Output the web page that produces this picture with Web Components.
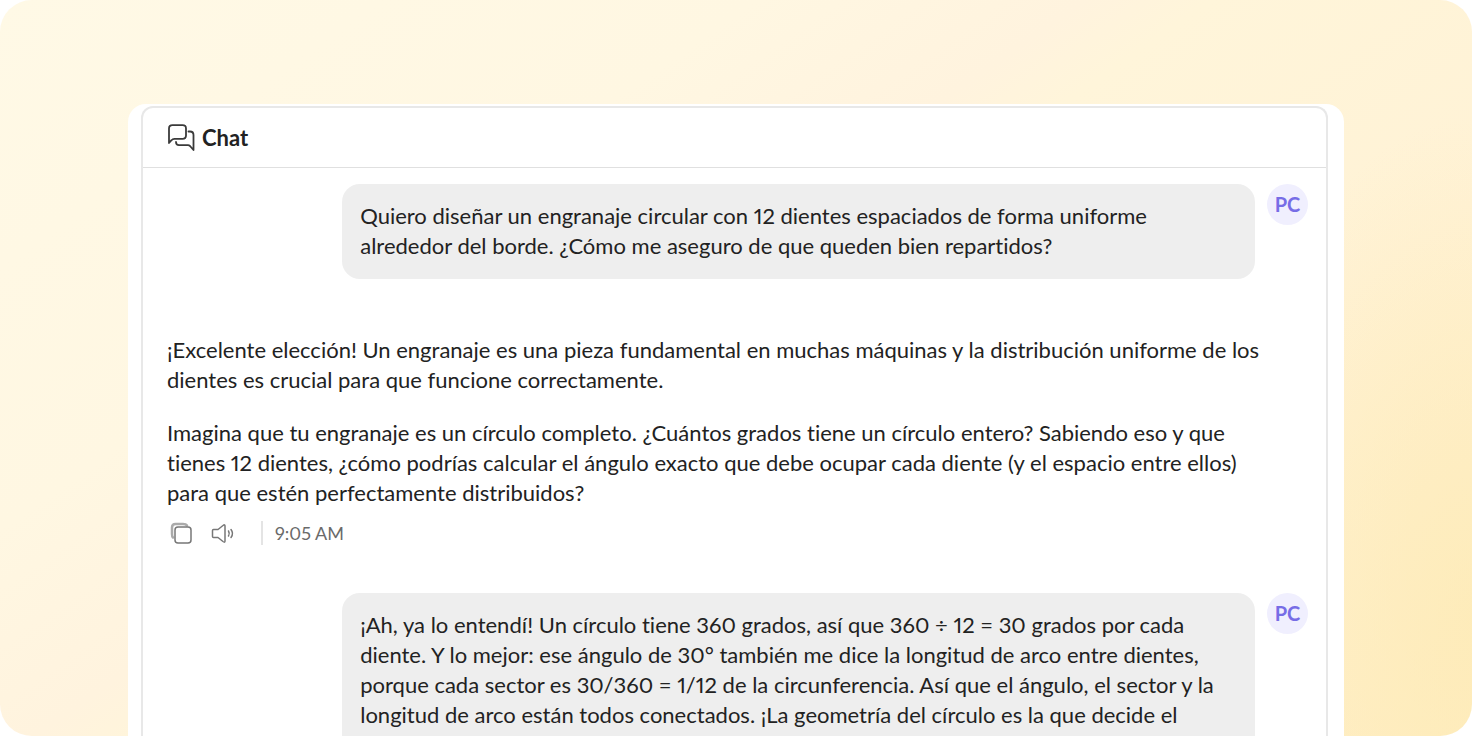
<!DOCTYPE html>
<html lang="es">
<head>
<meta charset="utf-8">
<meta name="viewport" content="width=device-width, initial-scale=1">
<title>Chat</title>
<style>
  body {
    margin: 0;
    background: #fff;
    color: #222;
    font-family: Lato, "Liberation Sans", sans-serif;
    font-size: 22px;
    line-height: 30px;
    font-variant-ligatures: none;
    font-variant-numeric: proportional-nums;
  }

  p {
    margin: 0;
  }
</style>
</head>
<body>

<template id="chat-stage">
  <style>
    :host {
      display: flex;
      box-sizing: border-box;
      height: 100vh;
      min-height: 400px;
      padding: 104px 128px 0;
      overflow: hidden;
      border-radius: 32px;
      background:
        radial-gradient(ellipse 260px 500px at 100% 84%, rgba(253, 234, 180, 0.7), rgba(253, 234, 180, 0) 100%),
        linear-gradient(145deg, #fff9e6 0%, #fff7e2 30%, #fff3de 43%, #fff5da 48%, #fff2d5 70%, #ffeec4 100%);
    }
  </style>
  <slot></slot>
</template>

<template id="chat-panel">
  <style>
    :host {
      display: flex;
      flex: 1;
      box-sizing: border-box;
      min-width: 0;
      padding: 2px 16px 0 13px;
      border-radius: 18px 18px 0 0;
      background: #fff;
    }

    .card {
      flex: 1;
      min-width: 0;
      overflow: hidden;
      border: 2px solid #e8e8e8;
      border-bottom: 0;
      border-radius: 12px 12px 0 0;
    }

    header {
      display: flex;
      align-items: center;
      gap: 7px;
      height: 59px;
      padding: 0 24px;
      border-bottom: 1px solid #e0e0e0;
    }

    h1 {
      margin: 0;
      font-size: 22px;
      font-weight: 700;
      line-height: 30px;
    }

    svg {
      width: 28px;
      height: 28px;
      fill: none;
      stroke: #3a3a3a;
      stroke-width: 1.8;
      stroke-linejoin: round;
      stroke-linecap: round;
    }

    main {
      padding: 16px 18px 16px 24px;
    }
  </style>
  <section class="card">
    <header>
      <svg viewBox="0 0 28 28" aria-hidden="true">
        <path d="M2 19V4.500Q2 1.200 5.500 1.200H15.500Q19 1.200 19 4.500V11.500Q19 14.800 15.500 14.800H7.500Q5.500 14.800 4.500 16.200Z" />
        <path d="M21.500 7.500H23Q26.500 7.500 26.500 11V26L23 22Q22.200 21.200 21 21.200H12Q9 21.200 9 18" />
      </svg>
      <h1><slot name="title"></slot></h1>
    </header>
    <main><slot></slot></main>
  </section>
</template>

<template id="user-message">
  <style>
    :host {
      display: flex;
      justify-content: flex-end;
      align-items: flex-start;
      gap: 12px;
    }

    .bubble {
      flex: 0 0 80%;
      box-sizing: border-box;
      padding: 17px 18px 18px;
      border-radius: 18px;
      background: #eee;
    }

    .avatar {
      flex: none;
      width: 41px;
      border-radius: 50%;
      background: #f0effe;
      color: #776de6;
      font-size: 20px;
      font-weight: 700;
      line-height: 41px;
      text-align: center;
    }
  </style>
  <div class="bubble"><slot></slot></div>
  <div class="avatar"></div>
</template>

<template id="tutor-message">
  <style>
    :host {
      display: block;
      padding: 56px 0 48px;
    }

    .text {
      display: flex;
      flex-direction: column;
      gap: 23px;
      margin-right: 32px;
    }

    .actions {
      display: flex;
      align-items: center;
      height: 24px;
      margin-top: 13px;
      padding-left: 3px;
    }

    button {
      width: 24px;
      height: 24px;
      margin: 0 17px 0 0;
      padding: 0;
      border: 0;
      background: none;
      cursor: pointer;
    }

    svg {
      display: block;
      width: 24px;
      height: 24px;
      fill: none;
      stroke: #777;
      stroke-linejoin: round;
      stroke-linecap: round;
    }

    time {
      margin-left: 9px;
      padding-left: 12px;
      border-left: 2px solid #e4e4e4;
      color: #6a6a6a;
      font-size: 18px;
      line-height: 24px;
    }
  </style>
  <div class="text"><slot></slot></div>
  <div class="actions">
    <button type="button" aria-label="Copiar">
      <svg viewBox="0 0 24 24">
        <path d="M3 16.500Q2 15.500 2 13V6.500Q2 3 5.500 3H13Q16 3 17 4.500" stroke="#aaa" stroke-width="2.500" />
        <rect x="5" y="6" width="16" height="16" rx="3" stroke-width="1.500" fill="#fff" />
      </svg>
    </button>
    <button type="button" aria-label="Escuchar">
      <svg viewBox="0 0 24 24" stroke-width="1.500">
        <path d="M2.500 8.500H7L12 4.500Q14 3 14 5V20Q14 22 12 20.500L7 16.500H2.500Q1.500 16.500 1.500 15.500V9.500Q1.500 8.500 2.500 8.500Z" />
        <path d="M17.500 10Q19 12.500 17.500 15M20 8.500Q23 12.500 20 16.500" />
      </svg>
    </button>
    <time></time>
  </div>
</template>

<chat-stage>
  <chat-panel>
    <span slot="title">Chat</span>
    <user-message initials="PC">
      <p>Quiero diseñar un engranaje circular con 12 dientes espaciados de forma uniforme<br>
      alrededor del borde. ¿Cómo me aseguro de que queden bien repartidos?</p>
    </user-message>
    <tutor-message time="9:05 AM">
      <p>¡Excelente elección! Un engranaje es una pieza fundamental en muchas máquinas y la distribución uniforme de los<br>
      dientes es crucial para que funcione correctamente.</p>
      <p>Imagina que tu engranaje es un círculo completo. ¿Cuántos grados tiene un círculo entero? Sabiendo eso y que<br>
      tienes 12 dientes, ¿cómo podrías calcular el ángulo exacto que debe ocupar cada diente (y el espacio entre ellos)<br>
      para que estén perfectamente distribuidos?</p>
    </tutor-message>
    <user-message initials="PC">
      <p>¡Ah, ya lo entendí! Un círculo tiene 360 grados, así que 360 ÷ 12 = 30 grados por cada<br>
      diente. Y lo mejor: ese ángulo de 30° también me dice la longitud de arco entre dientes,<br>
      porque cada sector es 30/360 = 1/12 de la circunferencia. Así que el ángulo, el sector y la<br>
      longitud de arco están todos conectados. ¡La geometría del círculo es la que decide el<br>
      diseño simple con grados iguales!</p>
    </user-message>
  </chat-panel>
</chat-stage>

<script>
  // Clones the template that shares its name with the tag
  class TemplateElement extends HTMLElement {
    constructor() {
      super();
      const template = document.getElementById(this.localName);
      this.attachShadow({ mode: "open" });
      this.shadowRoot.appendChild(template.content.cloneNode(true));
    }
  }

  class ChatStage extends TemplateElement {}

  class ChatPanel extends TemplateElement {}

  class UserMessage extends TemplateElement {
    static get observedAttributes() {
      return ["initials"];
    }

    attributeChangedCallback(attribute, oldValue, newValue) {
      this.shadowRoot.querySelector(".avatar").textContent = newValue;
    }
  }

  class TutorMessage extends TemplateElement {
    static get observedAttributes() {
      return ["time"];
    }

    attributeChangedCallback(attribute, oldValue, newValue) {
      this.shadowRoot.querySelector("time").textContent = newValue;
    }
  }

  customElements.define("chat-stage", ChatStage);
  customElements.define("chat-panel", ChatPanel);
  customElements.define("user-message", UserMessage);
  customElements.define("tutor-message", TutorMessage);
</script>
</body>
</html>
